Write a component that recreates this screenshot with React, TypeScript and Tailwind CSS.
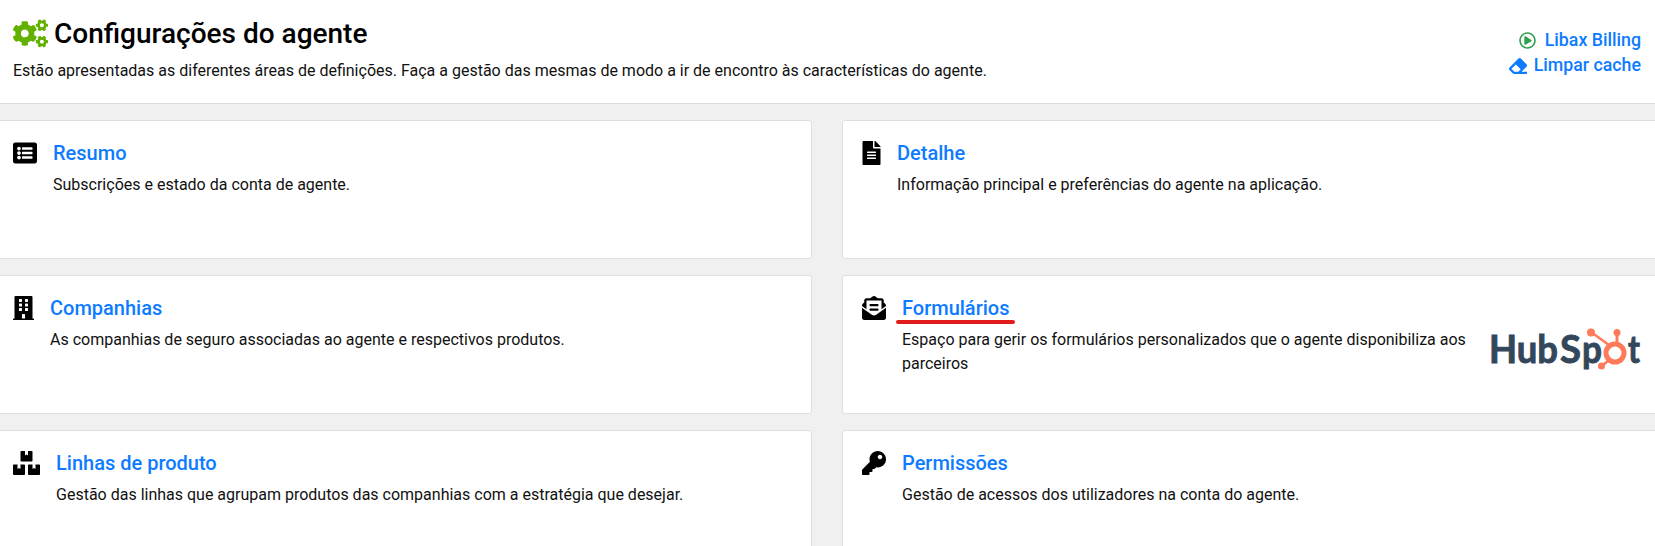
import React from "react";
import { FaCogs, FaListAlt, FaFileAlt, FaBuilding, FaEnvelopeOpenText, FaBoxes, FaKey, FaEraser, FaRegPlayCircle } from "react-icons/fa";

function HubSpotLogo() {
  return (
    <svg width="160" height="50" viewBox="-4 -5 160 50" className="shrink-0">
      <g fill="#33475b" stroke="#33475b" strokeWidth="0.9" fontFamily="Lato, sans-serif" fontWeight="700" fontSize="39">
        <text x="-2" y="35" textLength="69" lengthAdjust="spacingAndGlyphs">Hub</text>
        <text x="69" y="35" textLength="21" lengthAdjust="spacingAndGlyphs">S</text>
        <text x="91" y="35" textLength="20" lengthAdjust="spacingAndGlyphs">p</text>
        <text x="137" y="35" textLength="12" lengthAdjust="spacingAndGlyphs">t</text>
      </g>
      <g stroke="#ff7a59" fill="none">
        <circle cx="124" cy="25" r="9" strokeWidth="5" />
        <path d="M100 4 L118 17" strokeWidth="2.5" />
        <path d="M126 5 V15" strokeWidth="3" />
        <path d="M118 32 L111 38" strokeWidth="2.5" />
      </g>
      <g fill="#ff7a59">
        <circle cx="100" cy="4.5" r="4" />
        <circle cx="126" cy="4.5" r="3.5" />
        <circle cx="110.5" cy="38" r="3.5" />
      </g>
    </svg>
  );
}

type CardProps = {
  icon: React.ReactNode;
  title: string;
  desc: string;
  underline?: boolean;
  logo?: boolean;
};

function Card({ icon, title, desc, underline, logo }: CardProps) {
  return (
    <div className="flex h-[139px] items-start gap-4 rounded-[3px] border border-[#dfdfdf] bg-white pl-[19px] pr-[13px] pt-[17px]">
      <div className="shrink-0 pt-[3px] text-black">{icon}</div>
      <div className="min-w-0 flex-1">
        <div className="relative inline-block text-[20px] leading-[30px] font-medium text-[#0d7bff]">
          {title}
          {underline && <span className="absolute left-[-6px] top-[27px] h-[4px] w-[119px] rounded-full bg-[#e31b1b]" />}
        </div>
        <p className="mt-[5px] text-[16px] leading-[24px] text-[#111]">{desc}</p>
      </div>
      {logo && <div className="mt-[30px]"><HubSpotLogo /></div>}
    </div>
  );
}

export default function App() {
  return (
    <div className="h-[546px] w-[1655px] overflow-hidden bg-[#f0f0f0] font-['Roboto',sans-serif]">
      <header className="flex h-[104px] items-start justify-between border-b border-[#dcdcdc] bg-white pl-[13px] pr-[14px]">
        <div>
          <div className="flex items-center gap-[6px] pt-[16px]">
            <FaCogs className="h-[35px] w-[35px] text-[#62b000]" />
            <h1 className="text-[28px] leading-[34px] font-medium text-black">Configurações do agente</h1>
          </div>
          <p className="mt-[10px] text-[16px] leading-[20px] text-[#111]">
            Estão apresentadas as diferentes áreas de definições. Faça a gestão das mesmas de modo a ir de encontro às características do agente.
          </p>
        </div>
        <div className="flex flex-col items-end pt-[28px] text-[17.76px] leading-[25px] font-medium text-[#0d7bff]">
          <div className="flex items-center gap-[9px]">
            <FaRegPlayCircle className="h-[17px] w-[17px] text-[#2f9e4f]" />
            Libax Billing
          </div>
          <div className="flex items-center gap-[7px]">
            <FaEraser className="h-[18px] w-[18px]" />
            Limpar cache
          </div>
        </div>
      </header>
      <main className="-ml-[7px] grid w-[1668px] grid-cols-2 gap-x-[30px] gap-y-[16px] pt-[16px]">
        <Card icon={<FaListAlt className="h-[24px] w-[24px]" />} title="Resumo" desc="Subscrições e estado da conta de agente." />
        <Card icon={<FaFileAlt className="h-[24px] w-[19px]" />} title="Detalhe" desc="Informação principal e preferências do agente na aplicação." />
        <Card icon={<FaBuilding className="h-[24px] w-[21px]" />} title="Companhias" desc="As companhias de seguro associadas ao agente e respectivos produtos." />
        <Card icon={<FaEnvelopeOpenText className="h-[24px] w-[24px]" />} title="Formulários" desc="Espaço para gerir os formulários personalizados que o agente disponibiliza aos parceiros" underline logo />
        <Card icon={<FaBoxes className="h-[24px] w-[27px]" />} title="Linhas de produto" desc="Gestão das linhas que agrupam produtos das companhias com a estratégia que desejar." />
        <Card icon={<FaKey className="h-[24px] w-[24px]" />} title="Permissões" desc="Gestão de acessos dos utilizadores na conta do agente." />
      </main>
    </div>
  );
}
